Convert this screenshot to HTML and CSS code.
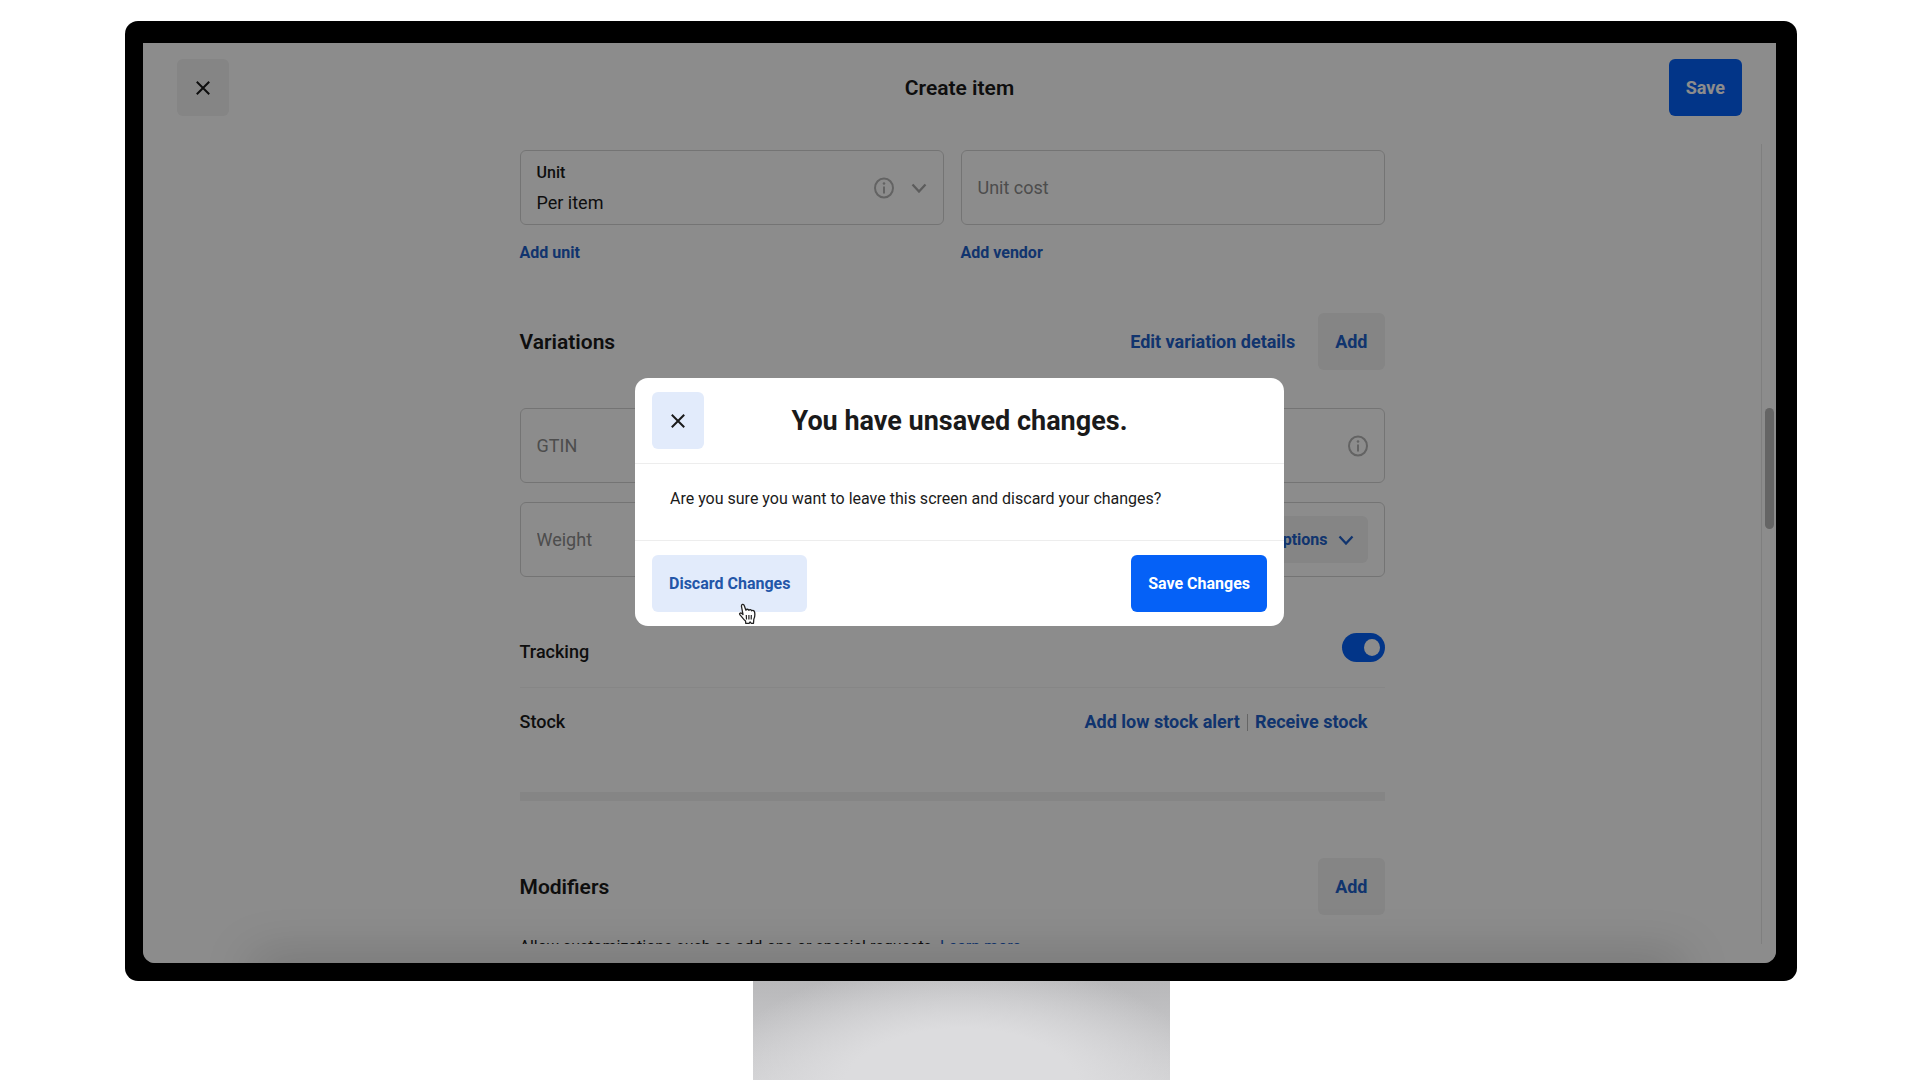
FILE: index.html
```html
<!DOCTYPE html>
<html lang="en">
<head>
<meta charset="utf-8">
<meta name="viewport" content="width=device-width, initial-scale=1">
<title>Create item</title>
<link rel="stylesheet" href="styles.css">
</head>
<body>
<svg class="sprite" aria-hidden="true">
  <symbol id="close" viewBox="0 0 14 14"><path d="M1.5 1.5l11 11M12.5 1.5l-11 11" fill="none" stroke="currentColor" stroke-width="2" stroke-linecap="square"/></symbol>
  <symbol id="info" viewBox="0 0 20 22"><ellipse cx="10" cy="11" rx="9" ry="9.5" fill="none" stroke="currentColor" stroke-width="2"/><path d="M10 9.5v7" stroke="currentColor" stroke-width="2"/><circle cx="10" cy="6.5" r="1.3" fill="currentColor"/></symbol>
  <symbol id="chevron" viewBox="0 0 16 10"><path d="M1.5 1.5L8 8.500l6.500-7" fill="none" stroke="currentColor" stroke-width="2.300"/></symbol>
</svg>
<div class="monitor">
  <div class="screen">
    <header class="topbar">
      <button class="btn btn-icon btn-muted" type="button" aria-label="Close"><svg class="icon-close"><use href="#close"/></svg></button>
      <h1 class="page-title">Create item</h1>
      <button class="btn btn-primary" type="button">Save</button>
    </header>
    <div class="scroller">
      <main class="form">
        <div class="pair">
          <div>
            <button class="field" type="button" aria-haspopup="listbox">
              <span class="field-text"><span class="field-label">Unit</span><span>Per item</span></span>
              <svg class="icon-info"><use href="#info"/></svg>
              <svg class="icon-chevron"><use href="#chevron"/></svg>
            </button>
            <a class="link link-small" href="#">Add unit</a>
          </div>
          <div>
            <div class="field"><input class="field-input" type="text" placeholder="Unit cost" aria-label="Unit cost"></div>
            <a class="link link-small" href="#">Add vendor</a>
          </div>
        </div>
        <section class="section-head variations-head">
          <h2 class="section-title">Variations</h2>
          <a class="link" href="#">Edit variation details</a>
          <button class="btn btn-muted" type="button">Add</button>
        </section>
        <div class="stack">
          <div class="field"><input class="field-input" type="text" placeholder="GTIN" aria-label="GTIN"><svg class="icon-info"><use href="#info"/></svg></div>
          <div class="field"><input class="field-input" type="text" placeholder="Weight" aria-label="Weight"><button class="options" type="button">Options<svg class="icon-chevron"><use href="#chevron"/></svg></button></div>
        </div>
        <div class="row tracking">
          <label for="tracking">Tracking</label>
          <input class="toggle" id="tracking" type="checkbox" role="switch" checked>
        </div>
        <div class="row stock">
          <span>Stock</span>
          <span class="row-links"><a class="link" href="#">Add low stock alert</a><span class="divider"></span><a class="link" href="#">Receive stock</a></span>
        </div>
        <hr class="band">
        <section class="section-head modifiers-head">
          <h2 class="section-title">Modifiers</h2>
          <button class="btn btn-muted" type="button">Add</button>
        </section>
        <p class="hint">Allow customizations such as add-ons or special requests. <a class="hint-link" href="#">Learn more</a></p>
      </main>
      <div class="track"><div class="thumb"></div></div>
    </div>
    <div class="glow"></div>
    <div class="overlay">
      <div class="modal" role="dialog" aria-modal="true" aria-labelledby="modal-title">
        <div class="modal-head">
          <button class="btn btn-icon btn-soft" type="button" aria-label="Close"><svg class="icon-close"><use href="#close"/></svg></button>
          <h2 class="modal-title" id="modal-title">You have unsaved changes.</h2>
        </div>
        <p class="modal-body">Are you sure you want to leave this screen and discard your changes?</p>
        <div class="modal-foot">
          <span class="discard">
            <button class="btn btn-soft btn-small" type="button">Discard Changes</button>
            <svg class="cursor" viewBox="0 0 18 22" aria-hidden="true"><path d="M5 11.500L3.500 3.500C3.200 1.200 5.600.6 6.300 2.700l1.600 4.500C8.500 5.800 10.400 6 10.800 7.300c.9-1.200 2.400-.7 2.800.5 1.300-.8 2.800 0 3 1.300.5 2.800.3 5-.8 7.200l-.3 4h-2.200l-1.200-1.400-1 1.400H7.800l-.3-2.300C5.700 16.500 4.300 14.300 2 11.900.600 10 3 9 5 11.500z" fill="#fff" stroke="#222" stroke-width="1.300" stroke-linejoin="round"/><path d="M8.300 12l.2 4.500M10.900 12v4.500M13.300 12l-.1 4.500" stroke="#222" stroke-width="1.200"/></svg>
          </span>
          <button class="btn btn-primary btn-small" type="button">Save Changes</button>
        </div>
      </div>
    </div>
  </div>
</div>
<div class="stand"></div>
</body>
</html>
```
FILE: styles.css
```css
* { box-sizing: border-box; }

body {
  margin: 0;
  min-height: 100vh;
  display: flex;
  flex-direction: column;
  background: #fff;
  color: #1a1a1a;
  font: 18px/24px Roboto, "Liberation Sans", sans-serif;
}

h1, h2, p { margin: 0; }
button, input { font: inherit; color: inherit; }
a { text-decoration: none; }
.sprite { position: absolute; width: 0; height: 0; }

.monitor {
  margin: 21px 123px 0 125px;
  padding: 22px 21px 18px 18px;
  background: #000;
  border-radius: 13px;
}

.screen {
  position: relative;
  display: flex;
  flex-direction: column;
  height: calc(100vh - 160px);
  padding-bottom: 19px;
  background: #fff;
  border-radius: 0 0 12px 12px;
  overflow: hidden;
}

.stand {
  flex: 1;
  align-self: center;
  width: 417px;
  margin-left: 2px;
  background:
    radial-gradient(ellipse at 50% 110%, #dcdcde 40%, rgba(220, 220, 222, 0) 85%),
    linear-gradient(#b8b8ba, #d0d0d2);
}

/* Buttons */
.btn {
  height: 57px;
  padding: 0 17px;
  border: 0;
  border-radius: 6px;
  font-weight: 700;
  white-space: nowrap;
}
.btn-small { font-size: 16px; }
.btn-primary { background: #0561f7; color: #fff; }
.btn-muted { background: #f2f2f2; color: #2060c8; }
.btn-soft { background: #e2ebfb; color: #2356a8; }
.btn-icon { display: grid; place-items: center; width: 52px; padding: 0; color: #1a1a1a; }

.icon-close { width: 14px; height: 14px; }
.icon-info { flex: none; width: 20px; height: 22px; color: #b4b4b4; }
.icon-chevron { flex: none; width: 16px; height: 10px; color: #a8a8a8; }

/* Header */
.topbar {
  display: grid;
  grid-template-columns: 1fr auto 1fr;
  align-items: center;
  padding: 16px 34px 28px 34px;
}
.topbar .btn-primary { justify-self: end; }
.page-title { font-size: 21px; line-height: 28px; font-weight: 600; }

/* Scrolling form */
.scroller {
  flex: 1;
  min-height: 0;
  display: grid;
  grid-template-columns: 1fr 15px;
  overflow: hidden;
}
.form {
  width: 865px;
  max-width: 100%;
  justify-self: center;
  padding-top: 6px;
}
.track { border-left: 1px solid #e8e8e8; padding: 264px 2px 0 3px; }
.thumb { height: 121px; border-radius: 5px; background: #b8b8b8; }

.pair { display: grid; grid-template-columns: 1fr 1fr; gap: 17px; }

.field {
  display: flex;
  align-items: center;
  gap: 17px;
  width: 100%;
  height: 75px;
  padding: 0 16px;
  border: 1px solid #d4d4d4;
  border-radius: 6px;
  background: none;
  text-align: left;
}
.field-text { flex: 1; display: flex; flex-direction: column; gap: 6px; }
.field-label { font-size: 16px; font-weight: 500; }
.field-input {
  flex: 1;
  min-width: 0;
  padding: 0;
  border: 0;
  outline: 0;
  background: none;
}
.field-input::placeholder { color: #8c8c8c; opacity: 1; }

.options {
  display: flex;
  align-items: center;
  gap: 10px;
  height: 47px;
  padding: 0 14px;
  border: 0;
  border-radius: 6px;
  background: #f2f2f2;
  color: #2060c8;
  font-size: 16px;
  font-weight: 700;
}
.options .icon-chevron { color: inherit; }

.link { color: #2060c8; font-weight: 700; }
.link-small { display: inline-block; margin-top: 16px; font-size: 16px; }

.section-head { display: flex; align-items: center; gap: 23px; }
.section-title { margin-right: auto; font-size: 21px; line-height: 28px; font-weight: 600; }
.variations-head { margin: 48px 0 38px; }
.modifiers-head { margin: 57px 0 22px; }

.stack { display: grid; gap: 19px; }

.row { display: flex; justify-content: space-between; font-weight: 500; }
.tracking { margin-top: 56px; padding-bottom: 23px; border-bottom: 1px solid #f4f4f4; }
.tracking label { padding-top: 7px; }
.stock { padding: 22px 17px 58px 0; }
.row-links { display: flex; align-items: center; gap: 7px; }
.divider { width: 1px; height: 17px; background: #b8b8b8; }

.toggle {
  appearance: none;
  display: flex;
  align-items: center;
  justify-content: flex-end;
  width: 43px;
  height: 29px;
  margin: 0;
  padding: 0 5px;
  border-radius: 15px;
  background: #0561f7;
}
.toggle::before { content: ""; width: 16px; height: 17px; border-radius: 50%; background: #fff; }

.band { height: 9px; margin: 0; border: 0; background: #f2f2f2; }
.hint { font-size: 16px; line-height: 20px; }
.hint-link { color: #2060c8; }

/* Soft shade along the lower screen edge */
.glow {
  position: absolute;
  left: 7%;
  right: 6%;
  bottom: -20px;
  height: 20px;
  box-shadow: 0 0 50px 6px rgba(0, 0, 0, .2);
}

/* Dialog */
.overlay {
  position: absolute;
  inset: 0;
  display: grid;
  place-items: center;
  padding-bottom: 2px;
  background: rgba(0, 0, 0, .45);
}
.modal { width: 649px; max-width: 100%; background: #fff; border-radius: 13px; }
.modal-head {
  display: grid;
  grid-template-columns: 52px 1fr 52px;
  align-items: center;
  padding: 14px 17px;
  border-bottom: 1px solid #ededed;
}
.modal-title { text-align: center; font-size: 27px; line-height: 36px; font-weight: 700; }
.modal-body { padding: 23px 35px 29px; font-size: 16px; }
.modal-foot {
  display: flex;
  justify-content: space-between;
  padding: 14px 17px;
  border-top: 1px solid #ededed;
}
.discard { position: relative; }
.cursor { position: absolute; left: 86px; top: 48px; width: 18px; height: 22px; }
```
